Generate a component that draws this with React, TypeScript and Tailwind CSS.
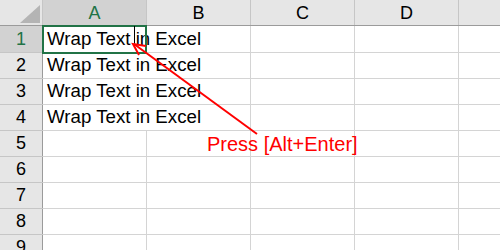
const cols = ['A', 'B', 'C', 'D']
const rows = [1, 2, 3, 4, 5, 6, 7, 8, 9]
const text = 'Wrap Text in Excel'

function Corner() {
  return (
    <div className="relative h-full w-[43px] shrink-0 border-r border-[#c6c6c6] bg-[#e6e6e6]">
      <svg width="43" height="25" className="absolute left-0 top-0">
        <polygon points="20,23 40,23 40,5" fill="#b4b4b4" />
      </svg>
    </div>
  )
}

function HeaderRow() {
  return (
    <div className="flex h-[26px] border-b border-[#9b9b9b] bg-[#e6e6e6]">
      <Corner />
      {cols.map((c) => (
        <div
          key={c}
          className={
            c === 'A'
              ? 'flex w-[104px] shrink-0 items-center justify-center border-r border-[#c6c6c6] bg-[#d2d2d2] pt-[2px] text-[18px] text-[#217346]'
              : 'flex w-[104px] shrink-0 items-center justify-center border-r border-[#c6c6c6] pt-[2px] text-[18px] text-black'
          }
        >
          {c}
        </div>
      ))}
      <div className="flex-1" />
    </div>
  )
}

function Row({ n }: { n: number }) {
  const filled = n <= 4
  const selected = n === 1
  return (
    <div
      className={
        selected
          ? 'flex h-[27px] border-b border-[#d4d4d4]'
          : 'flex h-[26px] border-b border-[#d4d4d4]'
      }
    >
      <div
        className={
          selected
            ? 'flex w-[43px] shrink-0 items-center justify-center border-r border-[#9b9b9b] bg-[#d2d2d2] text-[18px] text-[#217346] shadow-[0_1px_0_#c6c6c6]'
            : 'flex w-[43px] shrink-0 items-center justify-center border-r border-[#9b9b9b] bg-[#e6e6e6] text-[18px] text-black shadow-[0_1px_0_#c6c6c6]'
        }
      >
        {n}
      </div>
      <div
        className={
          filled
            ? 'flex w-[104px] shrink-0 items-center whitespace-nowrap border-r border-transparent pl-[4px] text-[18.7px] text-black'
            : 'w-[104px] shrink-0 border-r border-[#d4d4d4]'
        }
      >
        {filled ? text : null}
      </div>
      <div className="w-[104px] shrink-0 border-r border-[#d4d4d4]" />
      <div className="w-[104px] shrink-0 border-r border-[#d4d4d4]" />
      <div className="w-[104px] shrink-0 border-r border-[#d4d4d4]" />
      <div className="flex-1" />
    </div>
  )
}

export default function App() {
  return (
    <div
      className="relative h-[250px] w-[500px] overflow-hidden bg-white"
      style={{ fontFamily: '"Liberation Sans", Arial, sans-serif' }}
    >
      <HeaderRow />
      {rows.map((n) => (
        <Row key={n} n={n} />
      ))}

      {/* selected cell A1 */}
      <div className="pointer-events-none absolute left-[42px] top-[25px] h-[29px] w-[105px] border-2 border-[#217346]" />
      {/* text cursor */}
      <div className="pointer-events-none absolute left-[134px] top-[26px] h-[18px] w-px bg-black" />

      {/* callout */}
      <svg width="500" height="250" className="pointer-events-none absolute left-0 top-0">
        <line x1="257" y1="134" x2="134" y2="44" stroke="#ff0000" strokeWidth="2" />
        <polyline points="139,55 133,44 146,46" fill="none" stroke="#ff0000" strokeWidth="2" />
      </svg>
      <div className="absolute left-[207px] top-[133px] whitespace-nowrap text-[20px] leading-[22px] text-[#ff0000]">
        Press [Alt+Enter]
      </div>
    </div>
  )
}
